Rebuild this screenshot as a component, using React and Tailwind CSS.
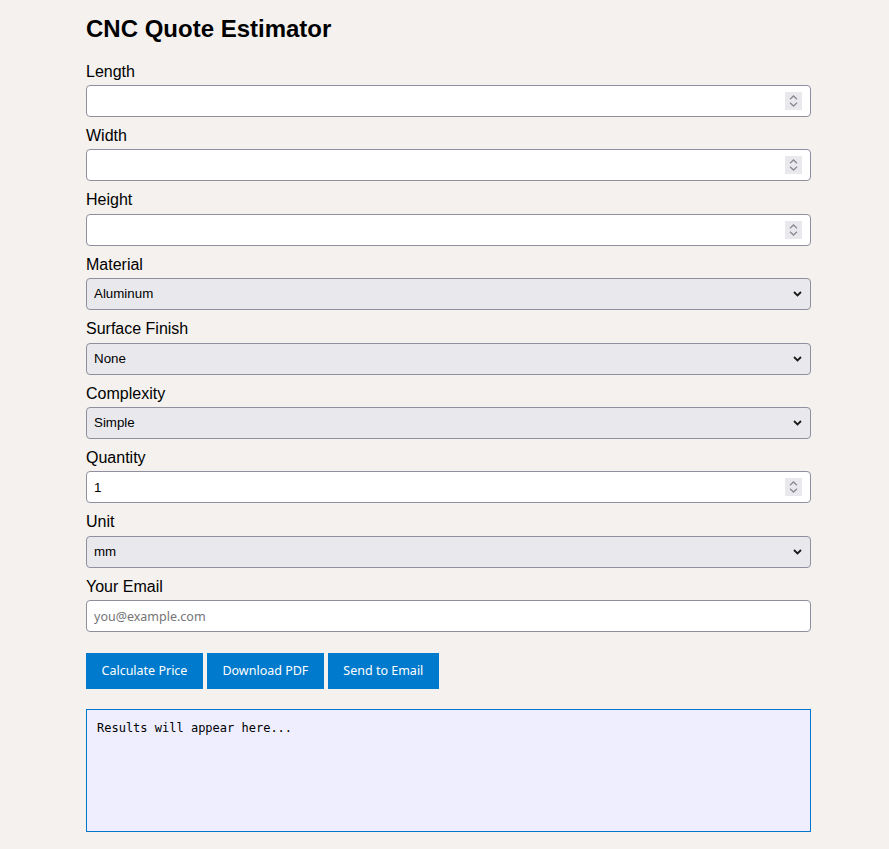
import React from 'react';

const fields = [
  { label: 'Length', type: 'number' },
  { label: 'Width', type: 'number' },
  { label: 'Height', type: 'number' },
  { label: 'Material', type: 'select', options: ['Aluminum', 'Steel', 'Brass', 'Plastic'] },
  { label: 'Surface Finish', type: 'select', options: ['None', 'Anodized', 'Powder Coated'] },
  { label: 'Complexity', type: 'select', options: ['Simple', 'Moderate', 'Complex'] },
  { label: 'Quantity', type: 'number', value: '1' },
  { label: 'Unit', type: 'select', options: ['mm', 'inch'] },
  { label: 'Your Email', type: 'email', placeholder: 'you@example.com' },
];

const controlBase =
  'block w-full h-8 border border-[#8f8f9d] rounded-[4px] pl-[7px] pr-[30px] text-[13.33px] text-black outline-none appearance-none';

const Spinner = () => (
  <div className="pointer-events-none absolute right-[9px] top-[7px] w-[17px] h-[18px] bg-[#e9e9ed] flex flex-col items-center justify-center gap-[2px]">
    <svg width="9" height="5" viewBox="0 0 9 5" fill="none">
      <path d="M1 4.2 L4.5 1 L8 4.2" stroke="#8a8a94" strokeWidth="1.3" />
    </svg>
    <svg width="9" height="5" viewBox="0 0 9 5" fill="none">
      <path d="M1 0.8 L4.5 4 L8 0.8" stroke="#8a8a94" strokeWidth="1.3" />
    </svg>
  </div>
);

const Chevron = () => (
  <svg
    className="pointer-events-none absolute right-[9px] top-[13px]"
    width="9"
    height="6"
    viewBox="0 0 9 6"
    fill="none"
  >
    <path d="M1 1 L4.5 4.5 L8 1" stroke="#1b1b1b" strokeWidth="1.8" />
  </svg>
);

const btn =
  "bg-[#007acc] text-white text-[12.5px] leading-4 py-[10px] px-[15.5px] font-['Noto_Sans',sans-serif]";

const App = () => {
  return (
    <div className="min-h-screen bg-[#f4f1ee] font-['Liberation_Sans',Arial,sans-serif] text-black">
      <div className="ml-[86px] w-[725px] pt-[15px] pb-4">
        <h1 className="text-2xl font-bold leading-[28px] mb-[19.6px]">CNC Quote Estimator</h1>

        {fields.map((f) => (
          <div key={f.label} className="mt-[10px]">
            <label className="block text-base leading-[18.4px] mb-1">{f.label}</label>
            <div className="relative">
              {f.type === 'select' ? (
                <>
                  <select className={controlBase + ' bg-[#e9e9ed]'} defaultValue={f.options[0]}>
                    {f.options.map((o) => (
                      <option key={o}>{o}</option>
                    ))}
                  </select>
                  <Chevron />
                </>
              ) : f.type === 'number' ? (
                <>
                  <input
                    type="number"
                    defaultValue={f.value}
                    className={controlBase + ' bg-white [&::-webkit-inner-spin-button]:appearance-none [&::-webkit-outer-spin-button]:appearance-none'}
                  />
                  <Spinner />
                </>
              ) : (
                <input
                  type={f.type}
                  placeholder={f.placeholder}
                  className={controlBase + " bg-white placeholder:text-[#757575] placeholder:font-['Noto_Sans',sans-serif] placeholder:text-[12.5px]"}
                />
              )}
            </div>
          </div>
        ))}

        <div className="mt-[21px] flex gap-1">
          <button className={btn}>Calculate Price</button>
          <button className={btn}>Download PDF</button>
          <button className={btn}>Send to Email</button>
        </div>

        <div className="mt-5 h-[123px] border border-[#0077cc] bg-[#eeeeff] p-[10px] font-['DejaVu_Sans_Mono',monospace] text-xs leading-4 whitespace-pre-wrap">
          Results will appear here...
        </div>
      </div>
    </div>
  );
};

export default App;
